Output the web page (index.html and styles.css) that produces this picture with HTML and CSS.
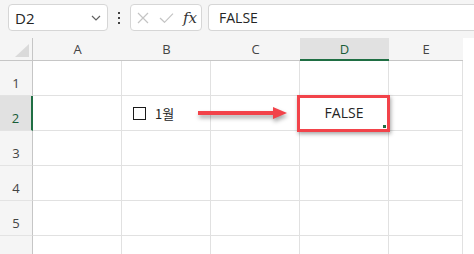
FILE: index.html
```html
<!DOCTYPE html>
<html lang="ko">
<head>
    <meta charset="UTF-8">
    <title>Checkbox FALSE</title>
    <link rel="stylesheet" href="styles.css">
</head>
<body>
    <div class="formula-bar">
        <div class="name-box">
            <span>D2</span>
            <svg class="chevron" width="10" height="6" viewBox="0 0 10 6"><path d="M1 1 L5 5 L9 1" fill="none" stroke="#616161" stroke-width="1.2"/></svg>
        </div>
        <div class="kebab"><i></i><i></i><i></i></div>
        <div class="fx-buttons">
            <svg width="12" height="12" viewBox="0 0 12 12"><path d="M1 1 L11 11 M11 1 L1 11" stroke="#c4c4c4" stroke-width="1.2"/></svg>
            <svg width="15" height="10" viewBox="0 0 15 10"><path d="M1 5 L5.5 9.3 L14 0.7" fill="none" stroke="#c4c4c4" stroke-width="1.2"/></svg>
            <span class="fx">fx</span>
        </div>
        <div class="formula-input">FALSE</div>
    </div>

    <div class="sheet">
        <div class="corner"><svg width="14" height="13" viewBox="0 0 14 13"><polygon points="14,0 14,13 0,13" fill="#dadada"/></svg></div>
        <div class="col-head">A</div>
        <div class="col-head">B</div>
        <div class="col-head">C</div>
        <div class="col-head active">D</div>
        <div class="col-head">E</div>

        <div class="row-head">1</div>
        <div class="cell"></div><div class="cell"></div><div class="cell"></div><div class="cell"></div><div class="cell"></div>

        <div class="row-head active">2</div>
        <div class="cell"></div>
        <div class="cell check-cell"><span class="box"></span><span>1월</span></div>
        <div class="cell"></div>
        <div class="cell value-cell">FALSE<span class="handle"></span></div>
        <div class="cell"></div>

        <div class="row-head">3</div>
        <div class="cell"></div><div class="cell"></div><div class="cell"></div><div class="cell"></div><div class="cell"></div>

        <div class="row-head">4</div>
        <div class="cell"></div><div class="cell"></div><div class="cell"></div><div class="cell"></div><div class="cell"></div>

        <div class="row-head">5</div>
        <div class="cell"></div><div class="cell"></div><div class="cell"></div><div class="cell"></div><div class="cell"></div>

        <div class="row-head last"></div>
        <div class="cell last"></div><div class="cell last"></div><div class="cell last"></div><div class="cell last"></div><div class="cell last"></div>

        <!-- annotation overlay -->
        <svg class="arrow" width="96" height="22" viewBox="0 0 96 22">
            <path d="M2 9 L80 9" stroke="#f2434a" stroke-width="4"/>
            <polygon points="77,3 91,9 77,15" fill="#f2434a"/>
        </svg>
        <div class="highlight"></div>
    </div>
</body>
</html>
```

FILE: styles.css
```css
* {
    margin: 0;
    padding: 0;
    box-sizing: border-box;
}

body {
    width: 474px;
    height: 254px;
    overflow: hidden;
    background: #ffffff;
    font-family: 'Open Sans', 'Noto Sans', 'Noto Sans CJK KR', sans-serif;
    color: #242424;
}

.formula-bar {
    height: 38px;
    background: #f5f5f5;
    display: flex;
    align-items: flex-start;
    padding: 4px 0 0 8px;
}

.name-box,
.fx-buttons,
.formula-input {
    height: 27px;
    background: #ffffff;
    border: 1px solid #d6d6d6;
    border-radius: 4px;
    display: flex;
    align-items: center;
}

.name-box {
    width: 100px;
    padding: 0 6px 0 6px;
    justify-content: space-between;
    font-size: 15px;
}

.kebab {
    width: 22px;
    height: 27px;
    display: flex;
    flex-direction: column;
    align-items: center;
    justify-content: center;
    gap: 3px;
}

.kebab i {
    width: 2px;
    height: 2px;
    background: #424242;
}

.fx-buttons {
    width: 72px;
    padding: 0 4px 0 6px;
    gap: 10px;
}

.fx {
    font-family: 'DejaVu Serif', 'Liberation Serif', serif;
    font-style: italic;
    font-size: 15px;
    color: #333333;
    margin-left: -1px;
}

.formula-input {
    flex: 1;
    margin-left: 6px;
    border-right: none;
    border-radius: 4px 0 0 4px;
    padding-left: 10px;
    font-size: 14px;
}

.sheet {
    position: relative;
    display: grid;
    grid-template-columns: 33px 89px 89px 89px 89px 74px;
    grid-template-rows: 23px repeat(5, 35px) 18px;
}

.corner,
.col-head,
.row-head {
    background: #f5f5f5;
    font-size: 13px;
    color: #444444;
}

.corner {
    border-right: 1px solid #c6c6c6;
    border-bottom: 1px solid #c6c6c6;
    display: flex;
    align-items: flex-end;
    justify-content: flex-end;
    padding: 0 3px 3px 0;
}

.col-head {
    border-bottom: 1px solid #c6c6c6;
    display: flex;
    align-items: center;
    justify-content: center;
}

.col-head.active {
    background: #e1e1e1;
    border-bottom: 2px solid #1f6e43;
    color: #185c37;
}

.row-head {
    border-right: 1px solid #c6c6c6;
    border-bottom: 1px solid #e3e3e3;
    display: flex;
    align-items: flex-end;
    justify-content: center;
    padding-bottom: 3px;
}

.row-head.active {
    background: #e1e1e1;
    border-right: 2px solid #1f6e43;
    color: #185c37;
}

.cell {
    border-right: 1px solid #e1e1e1;
    border-bottom: 1px solid #e1e1e1;
    font-size: 13px;
}

.cell.last,
.row-head.last {
    border-bottom: none;
}

.check-cell {
    display: flex;
    align-items: center;
    gap: 9px;
    padding-left: 11px;
    font-family: 'Noto Sans CJK KR', sans-serif;
}

.check-cell .box {
    width: 13px;
    height: 13px;
    border: 1.5px solid #1a1a1a;
}

.value-cell {
    position: relative;
    display: flex;
    align-items: center;
    justify-content: center;
    font-size: 14px;
    padding-bottom: 2px;
}

.handle {
    position: absolute;
    right: 2px;
    bottom: 2px;
    width: 3px;
    height: 3px;
    background: #1f6e43;
}

.arrow {
    position: absolute;
    left: 196px;
    top: 66px;
    filter: drop-shadow(1px 3px 2px rgba(0, 0, 0, 0.35));
}

.highlight {
    position: absolute;
    left: 297px;
    top: 57px;
    width: 93px;
    height: 37px;
    border: 3px solid #f2434a;
    box-shadow: 1px 2px 4px rgba(0, 0, 0, 0.35);
}
```
